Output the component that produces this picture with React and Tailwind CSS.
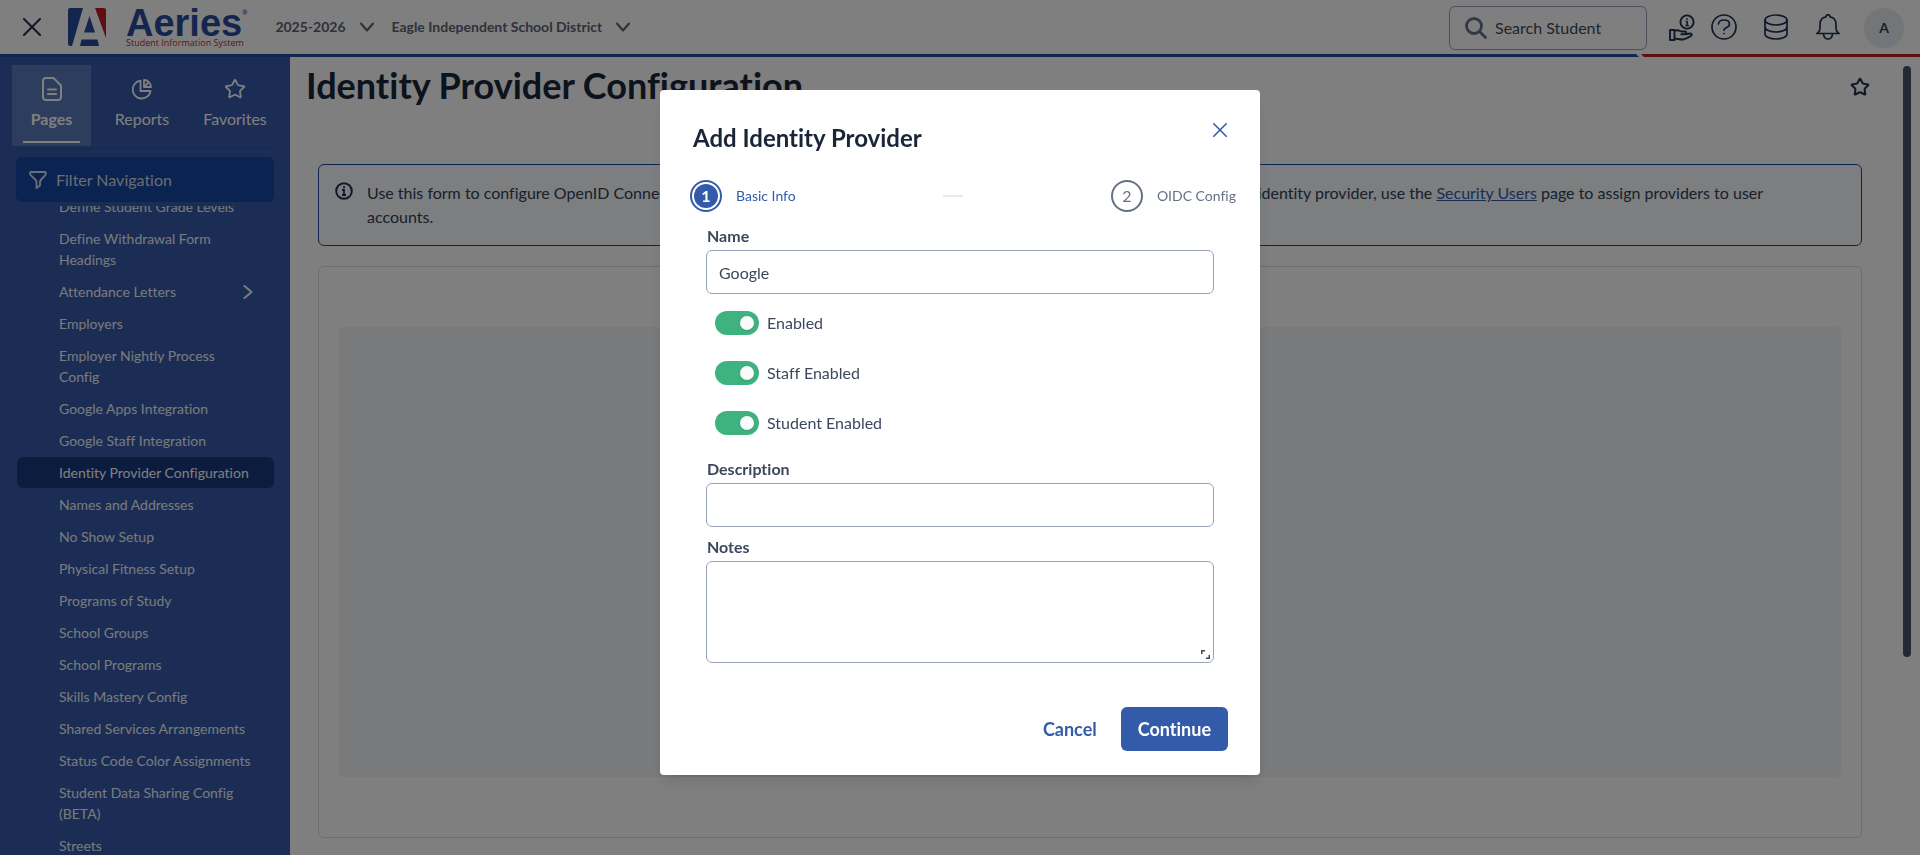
import React, { useState } from "react";
import { Star } from "lucide-react";

const navItems = [
  { label: "Define Student Grade Levels" },
  { label: "Define Withdrawal Form Headings" },
  { label: "Attendance Letters", hasChildren: true },
  { label: "Employers" },
  { label: "Employer Nightly Process Config" },
  { label: "Google Apps Integration" },
  { label: "Google Staff Integration" },
  { label: "Identity Provider Configuration", active: true },
  { label: "Names and Addresses" },
  { label: "No Show Setup" },
  { label: "Physical Fitness Setup" },
  { label: "Programs of Study" },
  { label: "School Groups" },
  { label: "School Programs" },
  { label: "Skills Mastery Config" },
  { label: "Shared Services Arrangements" },
  { label: "Status Code Color Assignments" },
  { label: "Student Data Sharing Config (BETA)" },
  { label: "Streets" },
];

function CloseIcon({ className }) {
  return (
    <svg className={className} viewBox="0 0 18 18" fill="none" stroke="currentColor" strokeWidth={2} strokeLinecap="round">
      <path d="M1 1l16 16M17 1L1 17" />
    </svg>
  );
}

function ChevronIcon({ className }) {
  return (
    <svg className={className} viewBox="0 0 14 10" fill="none" stroke="currentColor" strokeWidth={2} strokeLinecap="round" strokeLinejoin="round">
      <path d="M1 1.5l6 7 6-7" />
    </svg>
  );
}

function InfoIcon({ className }) {
  return (
    <svg className={className} viewBox="0 0 18 18" fill="none" stroke="currentColor" strokeWidth={2}>
      <circle cx="9" cy="9" r="7.8" />
      <path d="M7 8h2v5M7 13h4" strokeWidth={1.8} />
      <path d="M8 5.2h2" strokeWidth={2} />
    </svg>
  );
}

function Logo() {
  return (
    <div className="flex items-center gap-5">
      <svg className="h-[38px] w-[38px]" viewBox="0 0 38 38">
        <path fill="#2a4d9c" d="M2 0h13L4 38H2a2 2 0 01-2-2V2a2 2 0 012-2z" />
        <path fill="#bc1f26" d="M27 0h9a2 2 0 012 2v28z" />
        <path fill="#2a4d9c" d="M21.5 8L27 24.5H16zM13.5 31.5h16L31 38H12z" />
      </svg>
      <div className="flex flex-col">
        <div className="flex items-start font-['Liberation_Sans',sans-serif] font-bold text-[#2a4d9c]">
          <span className="text-[38px] leading-9">Aeries</span>
          <span className="pt-1 text-[7px] leading-2">®</span>
        </div>
        <span className="-mt-1 font-['Open_Sans',sans-serif] text-[9px] leading-3 text-[#bc1f26]">Student Information System</span>
      </div>
    </div>
  );
}

function HeaderSelect({ label, value }) {
  return (
    <div className="flex items-center gap-[14px] text-[#5b6472]">
      <select aria-label={label} className="appearance-none bg-transparent text-sm font-bold">
        <option>{value}</option>
      </select>
      <ChevronIcon className="h-[10px] w-[14px]" />
    </div>
  );
}

function Header() {
  return (
    <header className="shrink-0 bg-white">
      <div className="flex h-[54px] items-center pr-4 pl-[23px]">
        <button aria-label="Close navigation" className="mr-[27px] text-[#1f2f4a]">
          <CloseIcon className="h-[18px] w-[18px]" />
        </button>
        <Logo />
        <div className="ml-7 flex items-center gap-[17px]">
          <HeaderSelect label="School year" value="2025-2026" />
          <HeaderSelect label="School" value="Eagle Independent School District" />
        </div>

        <div className="ml-auto flex items-center text-[#1f3354]">
          <label className="mt-[2px] mr-[22px] flex h-11 w-[198px] items-center gap-2 rounded-md border border-[#94a3b8] pr-2 pl-[15px]">
            <svg className="h-[22px] w-[22px] shrink-0 text-[#64708a]" viewBox="0 0 22 22" fill="none" stroke="currentColor" strokeWidth={2.8} strokeLinecap="round">
              <circle cx="9" cy="9" r="7.5" />
              <path d="M14.8 14.8l5.7 5.7" />
            </svg>
            <input
              type="text"
              aria-label="Search Student"
              placeholder="Search Student"
              className="w-full min-w-0 bg-transparent text-base placeholder:text-[#3f4a5e] focus:outline-none"
            />
          </label>
          <button aria-label="Support" className="mr-4">
            <svg className="h-[27px] w-[26px]" viewBox="0 0 26 27" fill="none" stroke="currentColor" strokeWidth={1.9} strokeLinejoin="round">
              <circle cx="18" cy="8" r="6.6" />
              <path d="M16.6 7.4h1.6v4M16.400 11.400h3.400M17.2 5h1.6" strokeWidth={1.5} />
              <path d="M1 16h4.500v10H1zM5.500 17c2-.9 4-.9 5.500 0 1 .6 2 .5 3 .5h2c1.700 0 1.700 2.800 0 2.800h-4.500M17 20.300l4.200-.8c1.700-.2 2.200 1.800.8 2.500-2.500 1.300-5 3-8 3.500-3 .2-5.500-.8-8.500-1" />
            </svg>
          </button>
          <button aria-label="Help" className="mr-[27px]">
            <svg className="h-[26px] w-[26px]" viewBox="0 0 26 26" fill="none" stroke="currentColor" strokeWidth={1.7} strokeLinecap="round">
              <circle cx="13" cy="13" r="12" />
              <path d="M7.5 10c.2-2.5 2.2-4 5.4-4s5.6 1.6 5.6 4.2c0 3.6-5.5 3-5.5 6" />
              <circle cx="13" cy="19.6" r=".5" fill="currentColor" strokeWidth={1} />
            </svg>
          </button>
          <button aria-label="Databases" className="mr-7">
            <svg className="h-[26px] w-6" viewBox="0 0 24 26" fill="none" stroke="currentColor" strokeWidth={1.7}>
              <ellipse cx="12" cy="6" rx="11" ry="5" />
              <path d="M1 6v14c0 2.8 4.9 5 11 5s11-2.2 11-5V6M1 13c0 2.8 4.9 5 11 5s11-2.2 11-5" />
            </svg>
          </button>
          <button aria-label="Notifications" className="mr-6">
            <svg className="h-[26px] w-6" viewBox="0 0 24 26" fill="none" stroke="currentColor" strokeWidth={1.7} strokeLinecap="round" strokeLinejoin="round">
              <path d="M1 19.5h22c-2-1.500-3-2.500-3-5V10c0-3.600-2.500-6.500-6-7.200a2 2 0 00-4 0C6.500 3.500 4 6.400 4 10v4.500c0 2.500-1 3.500-3 5z" />
              <path d="M7.5 20c.3 2.900 2 5 4.500 5s4.200-2.100 4.500-5" />
            </svg>
          </button>
          <button className="mt-[2px] h-10 w-10 rounded-full bg-[#e8ebf0] text-sm font-bold text-[#33415c]">A</button>
        </div>
      </div>
      <div className="flex h-[3px] gap-[2px]">
        <div className="flex-1 bg-[#2a4d9c] [clip-path:polygon(0_0,calc(100%-3px)_0,100%_100%,0_100%)]" />
        <div className="w-[279px] bg-[#bc1f26] [clip-path:polygon(0_0,100%_0,100%_100%,3px_100%)]" />
      </div>
    </header>
  );
}

function Sidebar() {
  return (
    <aside className="flex w-[290px] shrink-0 flex-col overflow-hidden bg-[#365aa8] text-white">
      <div className="flex pt-2 pr-3 pl-3 text-base leading-6">
        <button className="flex h-[81px] w-[79px] flex-col items-center bg-[#587abc] pt-3 font-bold">
          <svg className="h-6 w-5" viewBox="0 0 20 24" fill="none" stroke="currentColor" strokeWidth={2} strokeLinecap="round" strokeLinejoin="round">
            <path d="M1 4a3 3 0 013-3h7.5L19 8.5V20a3 3 0 01-3 3H4a3 3 0 01-3-3zM6 12.5h8M6 17h8" />
          </svg>
          <span className="mt-[6px]">Pages</span>
          <span className="mt-[10px] h-[2px] w-[57px] bg-white" />
        </button>
        <button className="flex h-[81px] w-[102px] flex-col items-center pt-3">
          <svg className="h-6 w-5" viewBox="0 0 20 24" fill="none" stroke="currentColor" strokeWidth={1.8} strokeLinecap="round" strokeLinejoin="round">
            <path d="M8.5 3.600A9 9 0 1018.600 14H8.500z" />
            <path d="M12 3v7h7a7 7 0 00-7-7zM12.5 9.5l3.500-3.500" />
          </svg>
          <span className="mt-[6px]">Reports</span>
        </button>
        <button className="flex h-[81px] w-[84px] flex-col items-center pt-[13px]">
          <Star className="h-[22px] w-[22px]" strokeWidth={2} />
          <span className="mt-[7px]">Favorites</span>
        </button>
      </div>
      <div className="mx-4 mt-[2px] border-t border-[#2450a0]" />

      <label className="mx-4 mt-2 flex h-[45px] shrink-0 items-center gap-[9px] rounded-md bg-[#1446a0] px-[13px]">
        <svg className="h-[18px] w-[18px] shrink-0 text-[#d9e0ec]" viewBox="0 0 18 18" fill="none" stroke="currentColor" strokeWidth={1.8} strokeLinejoin="round">
          <path d="M2 1h14c1 0 1 .8 1 1.6 0 3-6 5-6 8.400v3.500L7.500 17v-6C7.500 7.600 1 5.600 1 2.600 1 1.800 1 1 2 1z" />
        </svg>
        <input
          type="text"
          aria-label="Filter Navigation"
          placeholder="Filter Navigation"
          className="w-full min-w-0 bg-transparent text-base placeholder:text-[#d3dbe8] focus:outline-none"
        />
      </label>

      <nav className="mt-1 min-h-0 flex-1 overflow-hidden">
        <ul className="-mt-[15px] pr-4 pl-[17px]">
          {navItems.map((item) => (
            <li key={item.label} className="mb-px">
              <a
                href="#"
                className={
                  item.active
                    ? "flex items-center justify-between rounded-md bg-[#18387c] py-[5px] pr-[18px] pl-[42px] text-sm leading-[21px]"
                    : "flex items-center justify-between rounded-md py-[5px] pr-[18px] pl-[42px] text-sm leading-[21px] text-[#f1f4f9]"
                }
              >
                {item.label}
                {item.hasChildren && <ChevronIcon className="mr-px h-[10px] w-[14px] -rotate-90" />}
              </a>
            </li>
          ))}
        </ul>
      </nav>
    </aside>
  );
}

function MainContent() {
  return (
    <main className="flex min-w-0 flex-1 overflow-hidden">
      <div className="flex min-w-0 flex-1 flex-col pr-[41px] pb-[17px] pl-7">
        <div className="-ml-3 flex h-[60px] items-center justify-between">
          <h1 className="pb-1 text-4xl leading-10 font-bold text-[#1a2638]">Identity Provider Configuration</h1>
          <button aria-label="Add to favorites" className="mr-[-8px] text-[#26344f]">
            <Star className="h-5 w-5" strokeWidth={2.5} />
          </button>
        </div>

        <div className="mt-[47px] flex rounded-md border border-[#1c48a8] bg-[#fafcff] p-4 pr-16">
          <InfoIcon className="mt-px mr-[14px] h-[18px] w-[18px] shrink-0 text-[#26344f]" />
          <p className="text-base leading-6 text-[#334155]">
            Use this form to configure OpenID Connect (OIDC) identity providers for single sign-on in this district. After you have set up an
            identity provider, use the{" "}
            <a href="#" className="text-[#335baa] underline">
              Security Users
            </a>{" "}
            page to assign providers to user accounts.
          </p>
        </div>

        <div className="mt-5 flex flex-1 rounded-md border border-[#d8dade] px-5 py-[60px]">
          <div className="flex-1 rounded bg-[#f2f4f8]" />
        </div>
      </div>
      <div className="mt-[9px] mr-[9px] h-[591px] w-2 shrink-0 rounded-full bg-[#475468]" />
    </main>
  );
}

function Toggle({ id, label, checked, onChange }) {
  return (
    <div className="flex h-[50px] items-center gap-2 pl-[9px]">
      <input
        id={id}
        type="checkbox"
        role="switch"
        checked={checked}
        onChange={(e) => onChange(e.target.checked)}
        className="flex h-6 w-11 appearance-none items-center rounded-full bg-gray-300 px-[5px] before:h-[14px] before:w-[14px] before:rounded-full before:bg-[#f8fafc] before:shadow before:content-[''] checked:justify-end checked:bg-[#3fb37f]"
      />
      <label htmlFor={id}>{label}</label>
    </div>
  );
}

function AddProviderModal() {
  const [name, setName] = useState("Google");
  const [description, setDescription] = useState("");
  const [notes, setNotes] = useState("");
  const [enabled, setEnabled] = useState(true);
  const [staffEnabled, setStaffEnabled] = useState(true);
  const [studentEnabled, setStudentEnabled] = useState(true);

  return (
    <div className="fixed inset-0 flex items-start justify-center bg-black/50 pt-[90px]">
      <div role="dialog" aria-labelledby="modal-title" className="w-[600px] rounded bg-white pb-6 text-base leading-6 text-[#3d485c] shadow-lg">
        <div className="flex items-start justify-between pt-6 pr-6 pl-[33px]">
          <h2 id="modal-title" className="mt-[10px] text-2xl leading-7 font-bold text-[#1a2638]">
            Add Identity Provider
          </h2>
          <button aria-label="Close" className="flex h-8 w-8 items-center justify-center text-[#335baa]">
            <CloseIcon className="h-[14px] w-[14px]" />
          </button>
        </div>

        {/* Steps */}
        <div className="mt-7 flex items-center justify-between pr-6 pl-[30px]">
          <div className="flex items-center gap-[14px] text-sm text-[#335baa]">
            <span className="flex h-8 w-8 items-center justify-center rounded-full border-2 border-[#335baa] p-[2px]">
              <span className="flex h-6 w-6 items-center justify-center rounded-full bg-[#335baa] text-base font-bold text-white">1</span>
            </span>
            Basic Info
          </div>
          <div className="h-[2px] w-5 bg-[#e6e8ed]" />
          <div className="flex items-center gap-[14px] text-sm text-[#667085]">
            <span className="flex h-8 w-8 items-center justify-center rounded-full border-2 border-[#667085] text-base">2</span>
            OIDC Config
          </div>
        </div>

        <form className="mt-3 flex flex-col px-[46px]">
          <label htmlFor="name" className="pl-px font-bold">
            Name
          </label>
          <input
            id="name"
            type="text"
            value={name}
            onChange={(e) => setName(e.target.value)}
            className="mt-[2px] h-11 rounded-md border border-[#98a2b8] px-3"
          />

          <div className="mt-1">
            <Toggle id="enabled" label="Enabled" checked={enabled} onChange={setEnabled} />
            <Toggle id="staff" label="Staff Enabled" checked={staffEnabled} onChange={setStaffEnabled} />
            <Toggle id="student" label="Student Enabled" checked={studentEnabled} onChange={setStudentEnabled} />
          </div>

          <label htmlFor="description" className="mt-[9px] pl-px font-bold">
            Description
          </label>
          <input
            id="description"
            type="text"
            value={description}
            onChange={(e) => setDescription(e.target.value)}
            className="mt-[2px] h-11 rounded-md border border-[#98a2b8] px-3"
          />

          <label htmlFor="notes" className="mt-2 pl-px font-bold">
            Notes
          </label>
          <div className="relative mt-[2px] flex">
            <textarea
              id="notes"
              value={notes}
              onChange={(e) => setNotes(e.target.value)}
              className="h-[102px] w-full resize-none rounded-md border border-[#98a2b8] px-3 py-2"
            />
            <svg className="absolute right-1 bottom-1 h-[9px] w-[9px]" viewBox="0 0 9 9" fill="none" stroke="#3d485c" strokeWidth={1.5}>
              <path d="M.75 4V.75H4M5 8.25h3.25V5" />
            </svg>
          </div>
        </form>

        <div className="mt-11 flex items-center justify-end gap-6 pr-8 text-lg font-bold">
          <button className="text-[#335baa]">Cancel</button>
          <button className="h-11 rounded-md bg-[#335baa] px-[17px] text-white">Continue</button>
        </div>
      </div>
    </div>
  );
}

function App() {
  return (
    <div className="flex h-screen flex-col overflow-hidden bg-white font-['Lato','Open_Sans',sans-serif] [font-variant-ligatures:none]">
      <Header />
      <div className="flex min-h-0 flex-1">
        <Sidebar />
        <MainContent />
      </div>
      <AddProviderModal />
    </div>
  );
}

export default App;
